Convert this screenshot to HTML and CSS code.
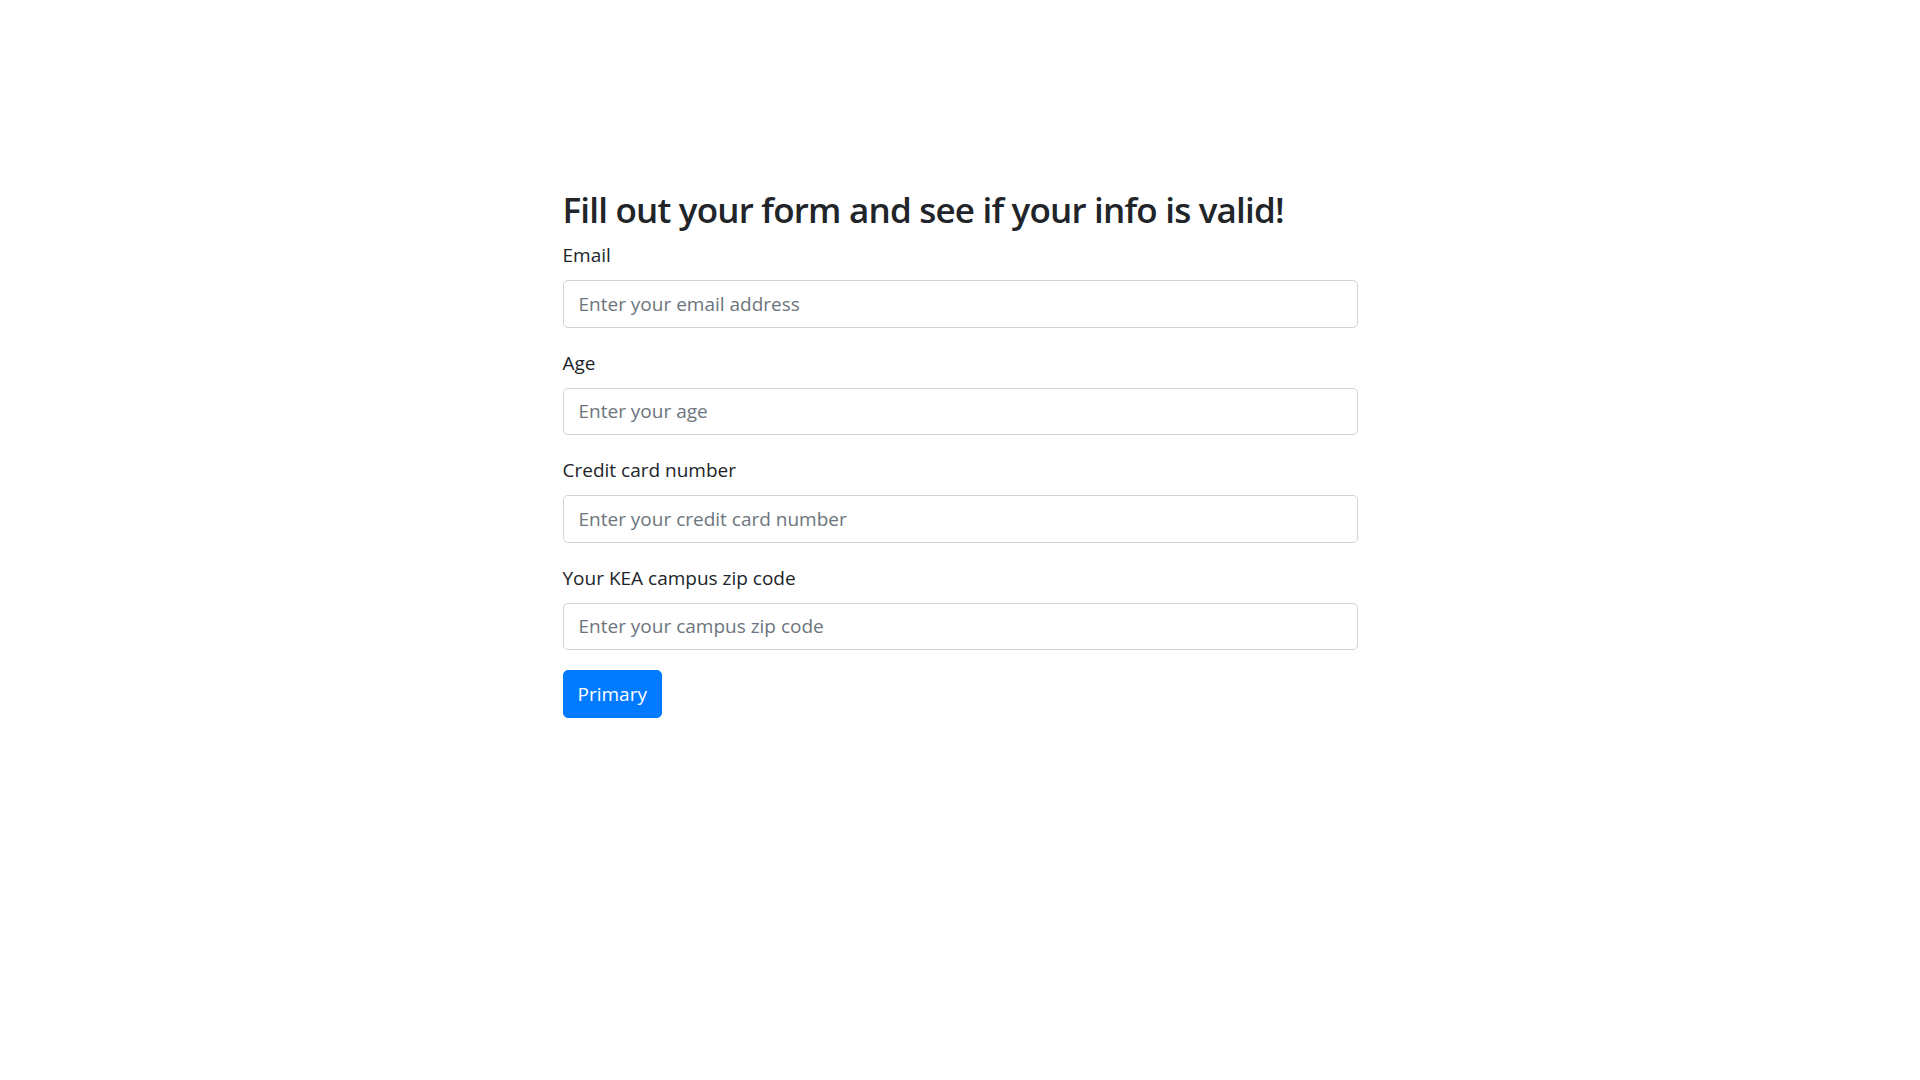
FILE: index.html
```html
<!DOCTYPE html>
<html lang="en">
<head>
<meta charset="utf-8">
<title>Form validation</title>
<link rel="stylesheet" href="styles.css">
</head>
<body>
<main class="container">
  <h2 class="title">Fill out your form and see if your info is valid!</h2>
  <form class="form">
    <div class="group">
      <label class="label" for="email">Email</label>
      <input class="input" id="email" type="text" placeholder="Enter your email address">
    </div>
    <div class="group">
      <label class="label" for="age">Age</label>
      <input class="input" id="age" type="text" placeholder="Enter your age">
    </div>
    <div class="group">
      <label class="label" for="cc">Credit card number</label>
      <input class="input" id="cc" type="text" placeholder="Enter your credit card number">
    </div>
    <div class="group">
      <label class="label" for="zip">Your KEA campus zip code</label>
      <input class="input" id="zip" type="text" placeholder="Enter your campus zip code">
    </div>
    <button class="btn" type="button">Primary</button>
  </form>
</main>
</body>
</html>
```
FILE: styles.css
```css
html, body {
  margin: 0;
  padding: 0;
  background: #fff;
}
body {
  font-family: "Open Sans", "Noto Sans", sans-serif;
  color: #212529;
  font-size: 19px;
  line-height: 1.5;
}
.container {
  width: 795px;
  margin: 0 auto;
  padding-top: 186px;
}
.title {
  margin: 0 0 6px;
  font-size: 35px;
  font-weight: 600;
  line-height: 48px;
  letter-spacing: -0.8px;
}
.form {
  display: flex;
  flex-direction: column;
  align-items: flex-start;
}
.group {
  display: flex;
  flex-direction: column;
  align-self: stretch;
  margin-bottom: 20px;
}
.label {
  display: block;
  line-height: 30px;
  margin-bottom: 10px;
}
.input {
  box-sizing: border-box;
  height: 47.5px;
  width: 100%;
  padding: 7.5px 15px;
  font-family: inherit;
  font-size: 19px;
  color: #495057;
  background: #fff;
  border: 1px solid #ced4da;
  border-radius: 5px;
  outline: none;
}
.input::placeholder {
  color: #6c757d;
  opacity: 1;
}
.btn {
  box-sizing: border-box;
  height: 47.5px;
  padding: 0 14px;
  font-family: inherit;
  font-size: 19px;
  color: #fff;
  background: #007bff;
  border: 1px solid #007bff;
  border-radius: 5px;
  cursor: pointer;
}
```
